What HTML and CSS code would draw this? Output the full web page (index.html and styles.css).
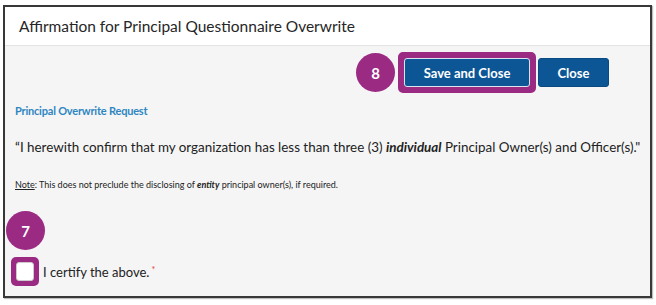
FILE: index.html
```html
<!DOCTYPE html>
<html lang="en">
<head>
    <meta charset="UTF-8">
    <meta name="viewport" content="width=device-width, initial-scale=1.0">
    <title>Affirmation for Principal Questionnaire Overwrite</title>
    <link rel="stylesheet" href="styles.css">
</head>
<body>
    <div class="dialog">
        <div class="dialog-header">
            <h1 class="dialog-title">Affirmation for Principal Questionnaire Overwrite</h1>
        </div>
        <div class="dialog-body">
            <div class="actions">
                <span class="step">8</span>
                <span class="highlight">
                    <button class="button save">Save and Close</button>
                </span>
                <button class="button close">Close</button>
            </div>

            <h2 class="section-title">Principal Overwrite Request</h2>
            <p class="statement">“I herewith confirm that my organization has less than three (3) <b><i>individual</i></b> Principal Owner(s) and Officer(s)."</p>
            <p class="note"><u>Note</u>: This does not preclude the disclosing of <b><i>entity</i></b> principal owner(s), if required.</p>

            <span class="step step-seven">7</span>
            <label class="certify">
                <span class="highlight highlight-box"><input type="checkbox" class="checkbox"></span>
                I certify the above.<span class="required">*</span>
            </label>
        </div>
    </div>
</body>
</html>
```

FILE: styles.css
```css
* {
    margin: 0;
    padding: 0;
    box-sizing: border-box;
}

body {
    background: #ffffff;
    padding: 5px 5px 7px 3px;
    font-family: 'Lato', 'Liberation Sans', sans-serif;
    color: #222222;
}

.dialog {
    width: 649px;
    height: 293px;
    border: 2px solid #383838;
    box-shadow: 1px 1px 1px rgba(0, 0, 0, 0.25);
    background: #f5f5f5;
    overflow: hidden;
}

.dialog-header {
    height: 39px;
    background: #ffffff;
    border-bottom: 1px solid #e3e3e3;
    display: flex;
    align-items: center;
    padding-left: 14px;
}

.dialog-title {
    font-size: 15.5px;
    font-weight: 400;
    color: #262626;
}

.dialog-body {
    padding: 6px 4px 0 10px;
}

.actions {
    display: flex;
    justify-content: flex-end;
    align-items: center;
    padding-right: 37px;
}

.step {
    width: 39px;
    height: 39px;
    border-radius: 50%;
    background: #9b2a83;
    color: #ffffff;
    font-weight: 700;
    font-size: 15px;
    display: flex;
    align-items: center;
    justify-content: center;
}

.actions .step {
    margin-right: 3px;
}

.highlight {
    display: inline-flex;
    border: 5px solid #9b2a83;
    border-radius: 5px;
    padding: 1px;
    background: #9b2a83;
}

.button {
    background: #0c5696;
    color: #ffffff;
    border: 1px solid #0a4a82;
    border-radius: 3px;
    font-family: 'Lato', 'Liberation Sans', sans-serif;
    font-weight: 700;
    font-size: 13px;
    height: 29px;
}

.save {
    width: 126px;
    border: 1px solid #d8e4f0;
}

.close {
    width: 71px;
    margin-left: 2px;
}

.section-title {
    margin-top: 11px;
    font-size: 11px;
    font-weight: 700;
    color: #2e86c1;
    letter-spacing: -0.2px;
}

.statement {
    margin-top: 22px;
    font-size: 13.4px;
    white-space: nowrap;
}

.note {
    margin-top: 24px;
    font-size: 9px;
}

.step-seven {
    margin-top: 21px;
    margin-left: -9px;
}

.certify {
    margin-top: 7px;
    margin-left: -4px;
    display: flex;
    align-items: center;
    font-size: 13px;
}

.highlight-box {
    border: none;
    padding: 5px;
    border-radius: 5px;
    margin-right: 4px;
}

.checkbox {
    appearance: none;
    width: 18px;
    height: 19px;
    background: #ffffff;
    border: 1px solid #cccccc;
    border-radius: 3px;
}

.required {
    color: #e23b3b;
    font-size: 9px;
    align-self: flex-start;
    margin-left: 2px;
    margin-top: 7px;
}
```
